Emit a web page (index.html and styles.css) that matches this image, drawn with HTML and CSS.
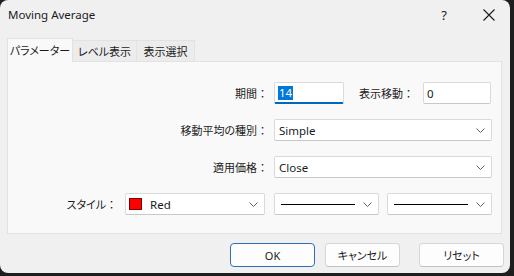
FILE: index.html
```html
<!DOCTYPE html>
<html lang="ja">
<head>
    <meta charset="UTF-8">
    <title>Moving Average</title>
    <link rel="stylesheet" href="styles.css">
</head>
<body>

    <div class="dialog">
        <div class="titlebar">
            <span class="title">Moving Average</span>
            <span class="help">?</span>
            <svg class="close" width="12" height="12" viewBox="0 0 12 12">
                <path d="M0.5 0.5 L11.5 11.5 M11.5 0.5 L0.5 11.5" stroke="#1b1b1b" stroke-width="1.1" fill="none"/>
            </svg>
        </div>

        <div class="tabs">
            <div class="tab active">パラメーター</div>
            <div class="tab level">レベル表示</div>
            <div class="tab view">表示選択</div>
        </div>

        <div class="panel">
            <div class="row">
                <span class="label">期間<span class="colon">：</span></span>
                <div class="field input focused"><span class="selected">14</span></div>
                <span class="label second">表示移動<span class="colon">：</span></span>
                <div class="field input small">0</div>
            </div>
            <div class="row">
                <span class="label">移動平均の種別<span class="colon">：</span></span>
                <div class="field select wide">
                    <span>Simple</span>
                    <svg class="chevron" width="9" height="5" viewBox="0 0 9 5"><polyline points="0.5,0.5 4.5,4.5 8.5,0.5" stroke="#5f5f5f" fill="none"/></svg>
                </div>
            </div>
            <div class="row">
                <span class="label">適用価格<span class="colon">：</span></span>
                <div class="field select wide">
                    <span>Close</span>
                    <svg class="chevron" width="9" height="5" viewBox="0 0 9 5"><polyline points="0.5,0.5 4.5,4.5 8.5,0.5" stroke="#5f5f5f" fill="none"/></svg>
                </div>
            </div>
            <div class="row">
                <span class="label">スタイル<span class="colon">：</span></span>
                <div class="field select color">
                    <span class="swatch"></span>
                    <span>Red</span>
                    <svg class="chevron" width="9" height="5" viewBox="0 0 9 5"><polyline points="0.5,0.5 4.5,4.5 8.5,0.5" stroke="#5f5f5f" fill="none"/></svg>
                </div>
                <div class="field select line-pick">
                    <span class="line"></span>
                    <svg class="chevron" width="9" height="5" viewBox="0 0 9 5"><polyline points="0.5,0.5 4.5,4.5 8.5,0.5" stroke="#5f5f5f" fill="none"/></svg>
                </div>
                <div class="field select line-pick">
                    <span class="line"></span>
                    <svg class="chevron" width="9" height="5" viewBox="0 0 9 5"><polyline points="0.5,0.5 4.5,4.5 8.5,0.5" stroke="#5f5f5f" fill="none"/></svg>
                </div>
            </div>
        </div>

        <div class="buttons">
            <button class="btn ok">OK</button>
            <button class="btn cancel">キャンセル</button>
            <button class="btn reset">リセット</button>
        </div>
    </div>

</body>
</html>
```

FILE: styles.css
```css
* {
    box-sizing: border-box;
}
body {
    margin: 0;
    background-color: #1e1e1e;
    font-family: "Noto Sans", "Noto Sans CJK JP", sans-serif;
    font-size: 11.5px;
    color: #1b1b1b;
}
.dialog {
    width: 510px;
    height: 273px;
    background-color: #f0f0f0;
    border-radius: 8px;
    display: flex;
    flex-direction: column;
    overflow: hidden;
}
.titlebar {
    height: 30px;
    display: flex;
    align-items: center;
    padding: 0 15px 0 8px;
}
.title {
    flex: 1;
    line-height: 16px;
}
.help {
    font-size: 13px;
    margin-right: 36px;
    line-height: 16px;
}
.tabs {
    display: flex;
    align-items: flex-end;
    height: 23px;
    margin-top: 8px;
    padding-left: 7px;
}
.tab {
    height: 21px;
    line-height: 20px;
    width: 64px;
    text-align: center;
    border: 1px solid #e2e2e2;
    border-bottom: none;
    background-color: #ececec;
    font-family: "Noto Sans CJK JP", sans-serif;
    font-size: 11px;
    font-feature-settings: "palt";
}
.tab.active {
    width: 66px;
    height: 24px;
    margin-bottom: -1px;
    line-height: 22px;
    background-color: #f9f9f9;
    position: relative;
    z-index: 1;
}
.tab.view {
    width: 58px;
}
.tab + .tab {
    border-left: none;
}
.panel {
    margin: 0 8px 0 7px;
    height: 173px;
    border: 1px solid #e2e2e2;
    background-color: #f9f9f9;
    padding: 20px 9px 18px 0;
    display: flex;
    flex-direction: column;
    gap: 15px;
}
.row {
    display: flex;
    align-items: center;
    justify-content: flex-end;
    height: 22px;
}
.label {
    font-family: "Noto Sans CJK JP", sans-serif;
    font-size: 11px;
    font-feature-settings: "palt";
    margin-right: 6px;
}
.colon {
    font-feature-settings: normal;
}
.label.second {
    margin-left: 15px;
    margin-right: 9px;
}
.field {
    height: 22px;
    background-color: #fff;
    border: 1px solid #dadada;
    border-bottom-color: #c8c8c8;
    border-radius: 2px;
    display: flex;
    align-items: center;
    padding-left: 4px;
}
.input {
    width: 70px;
}
.input.small {
    width: 68px;
    margin-right: 1px;
    padding-left: 3px;
}
.input.focused {
    border-bottom: 2px solid #0067c0;
    padding-left: 3px;
}
.selected {
    background-color: #0078d7;
    color: #fff;
    padding: 0 1px;
    line-height: 14px;
}
.select .chevron {
    margin-left: auto;
    margin-right: 6px;
}
.wide {
    width: 218px;
}
.color {
    width: 140px;
    margin-left: 2px;
    padding-left: 3px;
}
.swatch {
    width: 13px;
    height: 12px;
    background-color: #ff0000;
    border: 1px solid #7a0000;
    margin-right: 8px;
}
.line-pick {
    width: 105px;
    margin-left: 9px;
    padding-left: 6px;
}
.line-pick + .line-pick {
    margin-left: 8px;
}
.line {
    width: 74px;
    height: 1px;
    background-color: #000;
}
.buttons {
    display: flex;
    justify-content: flex-end;
    padding: 9px 6px 0 0;
}
.btn {
    height: 24px;
    background-color: #fdfdfd;
    border: 1px solid #d6d6d6;
    border-bottom-color: #c2c2c2;
    border-radius: 4px;
    font-family: "Noto Sans", "Noto Sans CJK JP", sans-serif;
    font-size: 11px;
    font-feature-settings: "palt";
    color: #1b1b1b;
    padding: 0;
}
.btn.ok {
    width: 85px;
    margin-right: 10px;
    border: 1px solid #2f6db5;
}
.btn.cancel {
    width: 75px;
    margin-right: 19px;
}
.btn.reset {
    width: 85px;
}
```
